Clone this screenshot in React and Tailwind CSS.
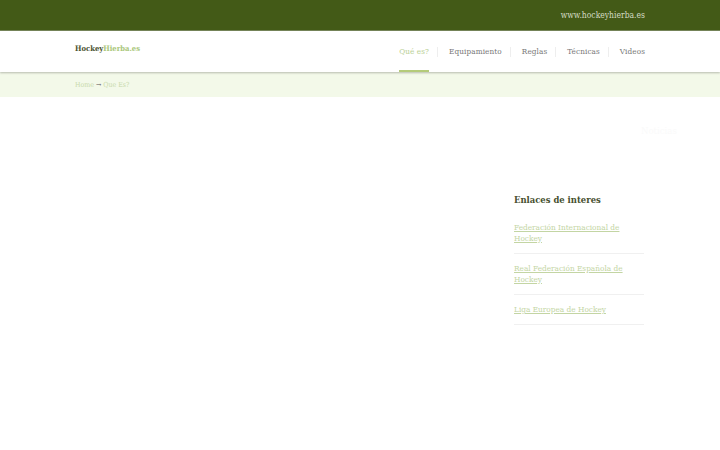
const navItems = ['Qué es?', 'Equipamiento', 'Reglas', 'Técnicas', 'Videos']

const links = [
  'Federación Internacional de Hockey',
  'Real Federación Española de Hockey',
  'Liga Europea de Hockey',
]

export default function App() {
  return (
    <div className="relative min-h-[450px] bg-white font-['DejaVu_Serif_Condensed','DejaVu_Serif',serif]">
      {/* Top bar */}
      <div className="h-[31px] bg-[#435a17] border-b border-[#76865a] flex items-center justify-end pr-[75px]">
        <span className="text-[8.5px] text-[#d5dcc6]">www.hockeyhierba.es</span>
      </div>

      {/* Header */}
      <div className="relative z-10 h-[41px] bg-white shadow-[0_1px_2px_rgba(0,0,0,0.25)] flex items-center justify-between px-[75px]">
        <div className="text-[7.6px] font-bold -mt-1.5">
          <span className="text-[#4a5230]">Hockey</span>
          <span className="text-[#a9c77a]">Hierba.es</span>
        </div>
        <nav className="flex h-full items-center">
          {navItems.map((item, i) => (
            <div key={item} className="flex h-full items-center">
              {i > 0 && <span className="w-px h-2.5 bg-[#eeeeee] ml-[8px] mr-[11px]" />}
              <a className={`h-full flex items-center pt-[2px] text-[8.1px] tracking-[0.1px] border-b-2 ${i === 0 ? 'text-[#b9cf94] border-[#b4cb7a]' : 'text-[#777777] border-transparent'}`}>
                {item}
              </a>
            </div>
          ))}
        </nav>
      </div>

      {/* Breadcrumb */}
      <div className="h-[25px] bg-[#f3f9e9] flex items-center pl-[75px] pt-[2px] text-[7px] text-[#c9d9ac]">
        Home <span className="text-[#555555] mx-0.5">→</span> Que Es?
      </div>

      {/* Faint heading hanging past the column */}
      <span className="absolute left-[641px] top-[124px] text-[9.5px] text-[#fafafa]">Noticias</span>

      {/* Content */}
      <div className="flex justify-end pr-[76px] pt-[96px]">
        <div className="w-[130px]">
          <h3 className="text-[9.4px] font-bold leading-[14px] text-[#46502f]">Enlaces de interes</h3>
          <ul className="mt-[15px]">
            {links.map(link => (
              <li key={link} className="border-b border-[#f0f0f0] pb-[9px] mb-[9px] text-[8.2px] leading-[11px] text-[#c3d5a3] underline">
                {link}
              </li>
            ))}
          </ul>
        </div>
      </div>
    </div>
  )
}
